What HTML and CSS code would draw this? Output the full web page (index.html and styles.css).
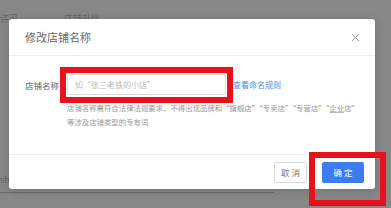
FILE: index.html
```html
<!DOCTYPE html>
<html lang="zh-CN">
<head>
    <meta charset="UTF-8">
    <meta name="viewport" content="width=device-width, initial-scale=1.0">
    <title>修改店铺名称</title>
    <link rel="stylesheet" href="styles.css">
</head>
<body>
    <div class="page">
        <div class="page-head">
            <span class="cell">许可</span>
            <span class="cell">店铺升级</span>
        </div>
        <div class="page-foot">
            <span class="cell">sh</span>
        </div>
        <div class="page-line"></div>
    </div>

    <div class="mask">
        <div class="modal">
            <div class="modal-head">
                <span class="modal-title">修改店铺名称</span>
                <span class="modal-close">
                    <svg width="9" height="9" viewBox="0 0 9 9"><path d="M1 1L8 8M8 1L1 8" stroke="#999" stroke-width="1" fill="none"/></svg>
                </span>
            </div>
            <div class="modal-body">
                <div class="form-row">
                    <label class="form-label">店铺名称</label>
                    <input class="form-input" type="text" placeholder="如“张三老铁的小店”">
                    <a class="form-link" href="#">查看命名规则</a>
                </div>
                <p class="form-help">店铺名称需符合法律法规要求，不得出现品牌和“旗舰店”“专卖店”“专营店”“<u>企业</u>店”<br>等涉及店铺类型的专有词</p>
            </div>
            <div class="modal-foot">
                <button class="btn">取 消</button>
                <button class="btn btn-primary">确 定</button>
            </div>
        </div>
    </div>

    <!-- выделения на скриншоте -->
    <div class="mark mark-input"></div>
    <div class="mark mark-ok"></div>
</body>
</html>
```

FILE: styles.css
```css
* {
    margin: 0;
    padding: 0;
    box-sizing: border-box;
    font-family: 'Noto Sans CJK SC', 'Noto Sans', sans-serif;
}

body {
    width: 391px;
    height: 208px;
    overflow: hidden;
    background: #fff;
    position: relative;
}

.page {
    height: 208px;
    display: flex;
    flex-direction: column;
    justify-content: space-between;
    color: #bbb;
    font-size: 9px;
}

.page-head {
    display: flex;
    padding-top: 12px;
}

.cell {
    width: 64px;
}

.page-foot {
    display: flex;
    margin-bottom: 22px;
}

.page-line {
    position: absolute;
    left: 0;
    top: 192px;
    width: 274px;
    height: 6px;
    border-top: 1px solid #c8c8c8;
}

.mask {
    position: absolute;
    inset: 0;
    background: rgba(0, 0, 0, 0.47);
    padding: 19px 0 0 9px;
}

.modal {
    width: 366px;
    height: 170px;
    background: #fff;
    border-radius: 3px;
    box-shadow: 0 2px 8px rgba(0, 0, 0, 0.15);
    display: flex;
    flex-direction: column;
}

.modal-head {
    height: 37px;
    display: flex;
    align-items: center;
    justify-content: space-between;
    padding: 0 15px 0 16px;
    border-bottom: 1px solid #ececec;
}

.modal-title {
    font-size: 11px;
    color: #666;
}

.modal-close {
    display: flex;
}

.modal-body {
    flex: 1;
    padding: 18px 16px 0 16px;
}

.form-row {
    display: flex;
    align-items: center;
}

.form-label {
    width: 42px;
    font-size: 8.5px;
    color: #666;
}

.form-input {
    width: 159px;
    height: 21px;
    border: 1px solid #dcdcdc;
    border-radius: 2px;
    padding-left: 7px;
    font-size: 8px;
    outline: none;
}

.form-input::placeholder {
    color: #bbb;
}

.form-link {
    margin-left: 7px;
    font-size: 8px;
    color: #4a8fe0;
    text-decoration: none;
}

.form-help {
    margin: 6px 0 0 42px;
    font-size: 7.4px;
    line-height: 13.5px;
    color: #999;
    white-space: nowrap;
}

.form-help u {
    text-decoration-color: #bbb;
}

.modal-foot {
    height: 35px;
    display: flex;
    align-items: center;
    justify-content: flex-end;
    gap: 15px;
    padding: 0 11px;
    border-top: 1px solid #ececec;
}

.btn {
    width: 33px;
    height: 21px;
    border: 1px solid #dcdcdc;
    border-radius: 2px;
    background: #fff;
    color: #777;
    font-size: 8.5px;
}

.btn-primary {
    width: 42px;
    border-color: #3b7cf0;
    background: #3b7cf0;
    color: #fff;
}

.mark {
    position: absolute;
    border: 6px solid #e8101a;
}

.mark-input {
    left: 60px;
    top: 67px;
    width: 173px;
    height: 36px;
}

.mark-ok {
    left: 309px;
    top: 152px;
    width: 77px;
    height: 54px;
}
```
